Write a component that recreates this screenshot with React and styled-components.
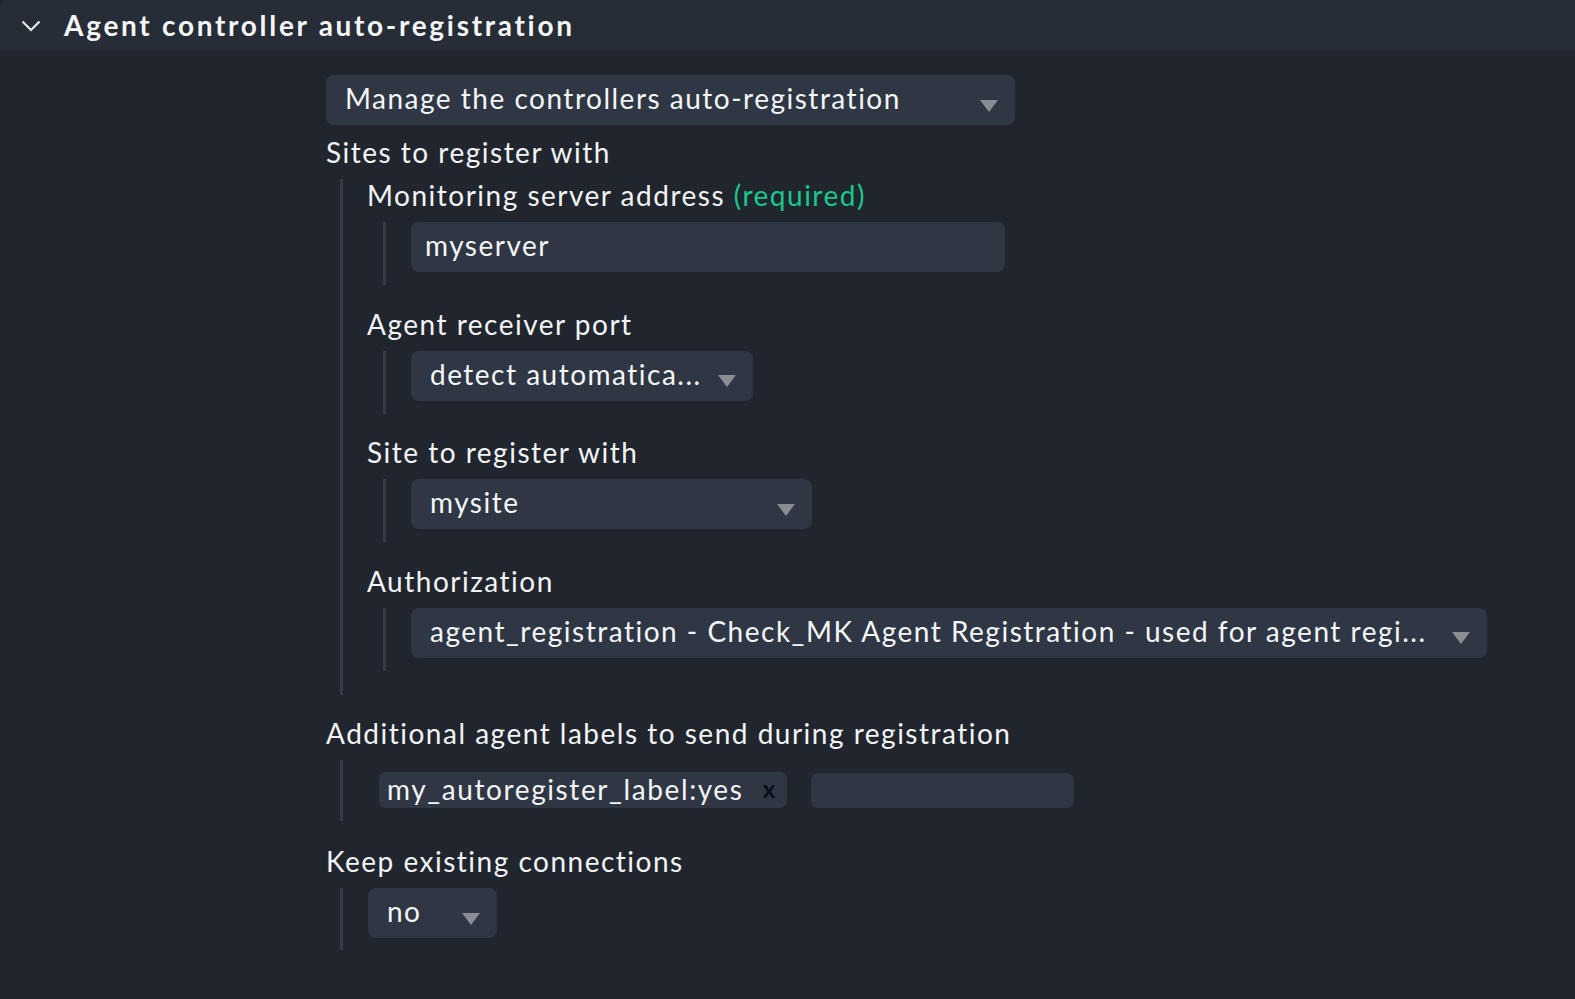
import React from "react";
import styled, { createGlobalStyle } from "styled-components";

const GlobalStyle = createGlobalStyle`
  html, body {
    margin: 0;
    padding: 0;
    background: #21262e;
  }
  body {
    font-family: Lato, "Noto Sans", sans-serif;
    color: #f2f4f6;
  }
`;

const Page = styled.div`
  min-height: 999px;
  background: #21262e;
`;

const Header = styled.div`
  display: flex;
  align-items: center;
  height: 50px;
  padding-left: 21px;
  background: #272d36;
  border-top-left-radius: 6px;
`;

const Chevron = styled.svg`
  width: 20px;
  height: 12px;
  margin-right: 23px;
  margin-top: 2px;
`;

const Title = styled.h2`
  margin: 0;
  font-size: 28px;
  font-weight: 700;
  letter-spacing: 2.7px;
  color: #f4f6f8;
`;

const Body = styled.div`
  padding: 25px 0 40px 326px;
`;

const Label = styled.div`
  font-size: 28px;
  line-height: 32px;
  letter-spacing: 1.5px;
  margin-bottom: 11px;
`;

const Required = styled.span`
  color: #17c98b;
`;

// indented block with the grey guide line on its left
const Nest = styled.div`
  margin-left: ${(p) => p.$indent ?? 14}px;
  border-left: 3px solid #343b47;
  padding-left: ${(p) => p.$pad ?? 24}px;
  padding-top: ${(p) => p.$top ?? 0}px;
  padding-bottom: ${(p) => p.$bottom ?? 13}px;
  margin-bottom: ${(p) => p.$after ?? 22}px;
`;

const Group = styled.div`
  margin-bottom: 22.6px;
`;

const Field = styled.div`
  box-sizing: border-box;
  display: flex;
  align-items: center;
  width: ${(p) => p.$w}px;
  height: 50px;
  padding: 0 17px 4px ${(p) => p.$pl ?? 19}px;
  background: #2f3744;
  border-radius: 8px;
  font-size: 28px;
  letter-spacing: 1.5px;
  margin-bottom: ${(p) => p.$mb ?? 0}px;
  color: #f4f6f8;
`;

const Value = styled.span`
  flex: 1;
  white-space: nowrap;
  overflow: hidden;
`;

const Arrow = styled.span`
  flex-shrink: 0;
  width: 0;
  height: 0;
  margin-top: 15px;
  border-left: 9px solid transparent;
  border-right: 9px solid transparent;
  border-top: 12px solid #8a8d91;
`;

const TagRow = styled.div`
  display: flex;
  align-items: center;
  gap: 24px;
  padding-left: 12px;
`;

const Tag = styled.div`
  box-sizing: border-box;
  display: flex;
  align-items: center;
  height: 36px;
  width: 408px;
  padding: 0 10px 2px 8px;
  background: #2f3744;
  border-radius: 7px;
  font-size: 28px;
  letter-spacing: 1.6px;
`;

const TagText = styled.span`
  flex: 1;
  white-space: nowrap;
`;

const Close = styled.span`
  font-size: 24px;
  font-weight: 700;
  line-height: 1;
  margin-bottom: 1px;
  color: #0d0f12;
`;

const EmptyInput = styled.div`
  width: 263px;
  height: 35px;
  background: #2f3744;
  border-radius: 7px;
`;

const Select = ({ w, children, mb }) => (
  <Field $w={w} $mb={mb}>
    <Value>{children}</Value>
    <Arrow />
  </Field>
);

const SubField = ({ label, required, children }) => (
  <Group>
    <Label>
      {label} {required && <Required>(required)</Required>}
    </Label>
    <Nest $indent={16} $pad={25} $after={0}>
      {children}
    </Nest>
  </Group>
);

export default function App() {
  return (
    <Page>
      <GlobalStyle />
      <Header>
        <Chevron viewBox="0 0 20 12">
          <path
            d="M1.5 1.5 L10 10 L18.5 1.5"
            fill="none"
            stroke="#e8ebee"
            strokeWidth="2.2"
          />
        </Chevron>
        <Title>Agent controller auto-registration</Title>
      </Header>
      <Body>
        <Select w={689} mb={11}>
          Manage the controllers auto-registration
        </Select>
        <Label>Sites to register with</Label>
        <Nest $bottom={2} $after={22}>
          <SubField label="Monitoring server address" required>
            <Field $w={594} $pl={14}>
              <Value>myserver</Value>
            </Field>
          </SubField>
          <SubField label="Agent receiver port">
            <Select w={342}>detect automatica...</Select>
          </SubField>
          <SubField label="Site to register with">
            <Select w={401}>mysite</Select>
          </SubField>
          <SubField label="Authorization">
            <Select w={1076}>
              agent_registration - Check_MK Agent Registration - used for agent regi...
            </Select>
          </SubField>
        </Nest>
        <Label>Additional agent labels to send during registration</Label>
        <Nest $top={12} $bottom={13} $pad={24} $after={24}>
          <TagRow>
            <Tag>
              <TagText>my_autoregister_label:yes</TagText>
              <Close>x</Close>
            </Tag>
            <EmptyInput />
          </TagRow>
        </Nest>
        <Label>Keep existing connections</Label>
        <Nest $pad={25} $bottom={12} $after={0}>
          <Select w={129}>no</Select>
        </Nest>
      </Body>
    </Page>
  );
}
